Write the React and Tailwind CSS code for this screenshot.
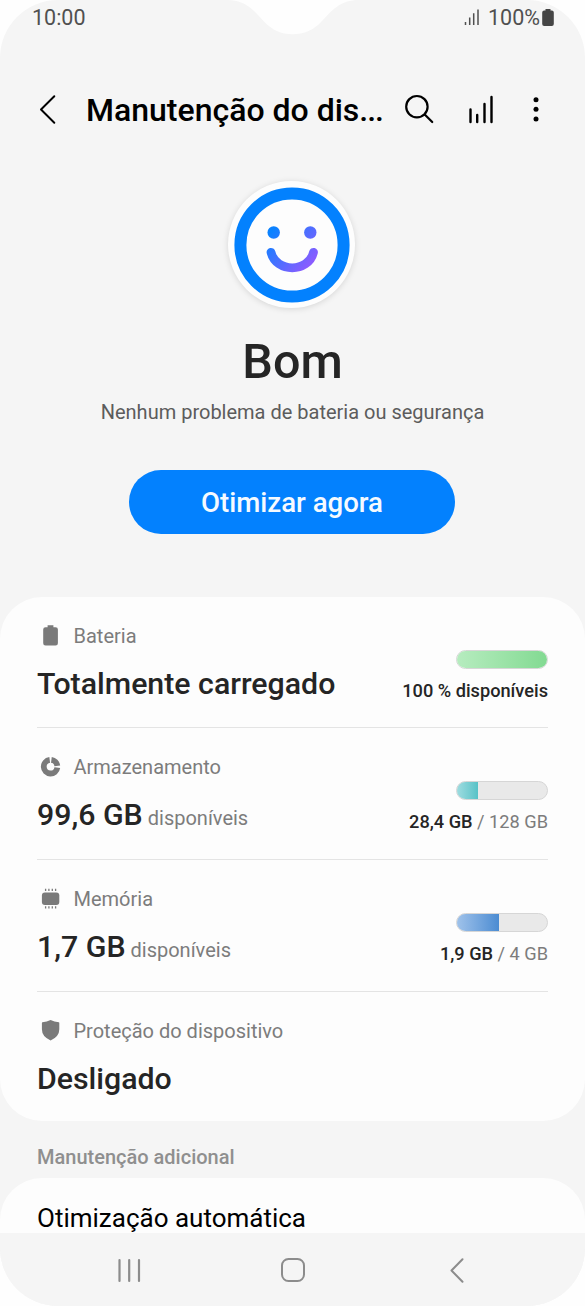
import React from 'react';

const BatteryIcon = () => (
    <svg width="28" height="28" viewBox="0 0 28 28" fill="#7a7a7a">
        <path d="M10.6 3.3h5.8v1.9h2.2q2.3 0 2.3 2.3v13.8q0 2.2-2.3 2.2H8.5q-2.3 0-2.3-2.2V7.5q0-2.300 2.300-2.300h2.100z" />
    </svg>
);

const StorageIcon = () => (
    <svg width="28" height="28" viewBox="0 0 28 28" fill="none" stroke="#7a7a7a" strokeWidth="5.8">
        <path d="M12.7 6.95A6.8 6.8 0 1 0 20.3 14.6" />
        <path d="M14.4 6.95A6.8 6.8 0 0 1 20.3 12.8" />
    </svg>
);

const MemoryIcon = () => (
    <svg width="28" height="28" viewBox="0 0 28 28" fill="#7a7a7a">
        <rect x="4.9" y="7.5" width="17.4" height="12.4" rx="3" />
        <path
            d="M8.6 3.7v2.400M11.900 3.700v2.400M15.300 3.700v2.400M18.600 3.700v2.400M8.600 21.200v2.200M11.900 21.200v2.200M15.300 21.200v2.200M18.600 21.200v2.200"
            stroke="#7a7a7a"
            strokeWidth="1.3"
        />
    </svg>
);

const ShieldIcon = () => (
    <svg width="28" height="28" viewBox="0 0 28 28" fill="#7a7a7a">
        <path d="M13.6 3q3.7 2 8.2 2.3.5 0 .5.6v6.4q0 7.400-8.700 11.200Q4.900 19.700 4.900 12.300V5.900q0-.6.5-.6 4.500-.3 8.200-2.300z" />
    </svg>
);

const rows = [
    {
        icon: BatteryIcon,
        label: 'Bateria',
        value: 'Totalmente carregado',
        bar: { percent: 100, color: 'from-[#b6ecbf] to-[#82da92]' },
        used: '100 % disponíveis',
    },
    {
        icon: StorageIcon,
        label: 'Armazenamento',
        value: '99,6 GB',
        suffix: 'disponíveis',
        bar: { percent: 23, color: 'from-[#9ddce0] to-[#56c2c7]' },
        used: '28,4 GB',
        total: ' / 128 GB',
    },
    {
        icon: MemoryIcon,
        label: 'Memória',
        value: '1,7 GB',
        suffix: 'disponíveis',
        bar: { percent: 47, color: 'from-[#9fc2ea] to-[#4b8cd2]' },
        used: '1,9 GB',
        total: ' / 4 GB',
    },
    {
        icon: ShieldIcon,
        label: 'Proteção do dispositivo',
        value: 'Desligado',
    },
];

const StatusBar = () => (
    <div className="flex h-[34px] justify-between pl-[32px] pr-[31px] text-[21.5px] leading-[35px] text-[#505050]">
        <span>10:00</span>
        <div className="flex">
            <svg className="mt-[8px] mr-[8px]" width="16" height="18" viewBox="0 0 16 18" stroke="#505050" strokeWidth="1.5">
                <path d="M1.500 14V17M5.700 9.500V17M9.700 5.300V17M14 1.500V17" />
            </svg>
            <span>100%</span>
            <svg className="mt-[8px] ml-[2px]" width="12" height="19" viewBox="0 0 12 19" fill="#454545">
                <path d="M3.500 1h5v1.400h1.300q2 0 2 2V16q0 2-2 2H2.200q-2 0-2-2V4.400q0-2 2-2h1.300z" />
            </svg>
        </div>
    </div>
);

const Header = () => (
    <div className="mt-[46px] flex h-[60px] items-center pl-[38px] pr-[38px] text-black">
        <svg width="20" height="32" viewBox="0 0 20 32" fill="none" stroke="currentColor" strokeWidth="2" strokeLinecap="round" strokeLinejoin="round">
            <path d="M16.300 2.300L3 15.500l13.300 13.200" />
        </svg>
        <h1 className="ml-[28px] w-[318px] whitespace-nowrap text-[32px] font-medium">
            Manutenção do dis<span className="tracking-[-1px]">...</span>
        </h1>
        <svg className="shrink-0" width="32" height="32" viewBox="0 0 32 32" fill="none" stroke="currentColor" strokeWidth="2.200" strokeLinecap="round">
            <circle cx="12.900" cy="12.700" r="10.700" />
            <path d="M20.700 20.500l7.500 7.500" />
        </svg>
        <svg className="ml-[31px] shrink-0" width="28" height="32" viewBox="0 0 28 32" stroke="currentColor" strokeWidth="2.400" strokeLinecap="round">
            <path d="M3.500 15.500V28M10.200 21V28M17.500 10V28M24.500 3V28" />
        </svg>
        <svg className="ml-[35.500px] shrink-0" width="10" height="32" viewBox="0 0 10 32" fill="currentColor">
            <circle cx="5" cy="5.700" r="2.500" />
            <circle cx="5" cy="15.300" r="2.500" />
            <circle cx="5" cy="25" r="2.500" />
        </svg>
    </div>
);

const Face = () => (
    <div className="mt-[41px] mr-[2px] flex h-[127px] w-[127px] items-center justify-center rounded-full bg-[#fdfdfd] shadow-[0_1px_6px_rgba(0,0,0,0.13)]">
        <svg width="116" height="116" viewBox="0 0 116 116" fill="none">
            <defs>
                <linearGradient id="face" gradientUnits="userSpaceOnUse" x1="36" y1="46" x2="74" y2="80">
                    <stop offset="0" stopColor="#0a82ff" />
                    <stop offset="1" stopColor="#8a5cff" />
                </linearGradient>
            </defs>
            <circle cx="58" cy="58" r="51.600" stroke="#0381fe" strokeWidth="12" />
            <circle cx="39.700" cy="45.500" r="6.200" fill="url(#face)" />
            <circle cx="76.300" cy="45.500" r="6.200" fill="url(#face)" />
            <path d="M37 65.300C42 86 74.500 86 79.500 65.300" stroke="url(#face)" strokeWidth="8.800" strokeLinecap="round" />
        </svg>
    </div>
);

const UsageBar = ({ percent, color }) => (
    <div className="h-[19px] w-[92px] overflow-hidden rounded-full border border-[#d6d6d6] bg-[#e9e9e9]">
        <div className={`h-full bg-linear-to-r ${color}`} style={{ width: `${percent}%` }} />
    </div>
);

const Row = ({ row, first }) => {
    const Icon = row.icon;
    return (
        <div className={first ? 'flex h-[130px] justify-between' : 'flex h-[132px] justify-between border-t-[1.5px] border-[#e4e4e4]'}>
            <div className="pt-[25px]">
                <div className="flex h-[28px] items-center text-[20px] text-[#7c7c7c]">
                    <Icon />
                    <span className="ml-[8.500px]">{row.label}</span>
                </div>
                <div className="mt-[14px] whitespace-nowrap text-[30.300px] leading-[40px] font-medium text-[#252525]">
                    {row.value}
                    {row.suffix && <span className="ml-[5px] text-[20px] font-normal text-[#7c7c7c]">{row.suffix}</span>}
                </div>
            </div>
            {row.bar && (
                <div className="flex flex-col items-end pt-[53px]">
                    <UsageBar {...row.bar} />
                    <div className="mt-[10px] text-[18.200px] leading-[24px] whitespace-pre text-[#7c7c7c]">
                        <span className="font-medium text-[#252525]">{row.used}</span>
                        {row.total}
                    </div>
                </div>
            )}
        </div>
    );
};

const NavBar = () => (
    <div className="flex h-[73px] items-center justify-between bg-[#f5f5f5] pl-[115px] pr-[115px] text-[#8c8c8c]">
        <svg width="28" height="28" viewBox="0 0 28 28" stroke="currentColor" strokeWidth="2.200" strokeLinecap="round">
            <path d="M4.500 4V25M14.200 4V25M24 4V25" />
        </svg>
        <svg width="28" height="28" viewBox="0 0 28 28" fill="none" stroke="currentColor" strokeWidth="2">
            <rect x="3" y="3" width="22" height="22" rx="6.500" />
        </svg>
        <svg width="28" height="28" viewBox="0 0 28 28" fill="none" stroke="currentColor" strokeWidth="2" strokeLinecap="round" strokeLinejoin="round">
            <path d="M20.500 3.300L9.500 14.500l11 11.200" />
        </svg>
    </div>
);

const App = () => {
    return (
        <div className="h-[1306px] w-[585px] bg-[#fefefe] font-['Roboto',sans-serif]">
            <div className="relative flex h-full flex-col overflow-hidden rounded-[58px] bg-[#f5f5f5]">
                {/* camera notch */}
                <svg className="absolute top-0 left-[222px]" width="142" height="35" viewBox="0 0 142 35" fill="#fefefe">
                    <path d="M5 0C24 0 31 10 41.500 21C50 30 59 34.300 70.500 34.300S92 30 100 21C110.500 10 118 0 137 0z" />
                </svg>
                <StatusBar />
                <Header />

                <div className="flex flex-col items-center">
                    <Face />
                    <h2 className="mt-[24px] text-[48.500px] leading-[60px] font-medium text-[#252525]">Bom</h2>
                    <p className="mt-[5px] text-[20px] leading-[30px] text-[#5c5c5c]">Nenhum problema de bateria ou segurança</p>
                    <button className="mt-[43px] mr-[1px] h-[64px] w-[326px] rounded-full bg-[#0381fe] pt-[2px] text-[27.600px] font-medium text-[#f5faff]">
                        Otimizar agora
                    </button>
                </div>

                <div className="mt-[63px] h-[524px] shrink-0 rounded-[42px] bg-[#fdfdfd] px-[37px]">
                    {rows.map((row, i) => (
                        <Row key={row.label} row={row} first={i === 0} />
                    ))}
                </div>

                <h3 className="mt-[21px] ml-[37px] text-[20px] leading-[30px] font-medium text-[#8f8f8f]">Manutenção adicional</h3>
                <div className="mt-[6px] h-[55px] shrink-0 overflow-hidden rounded-t-[42px] bg-[#fdfdfd] px-[37px] pt-[20px] text-[26px] leading-[40px] text-black">
                    Otimização automática
                </div>
                <NavBar />
            </div>
        </div>
    );
};

export default App;
